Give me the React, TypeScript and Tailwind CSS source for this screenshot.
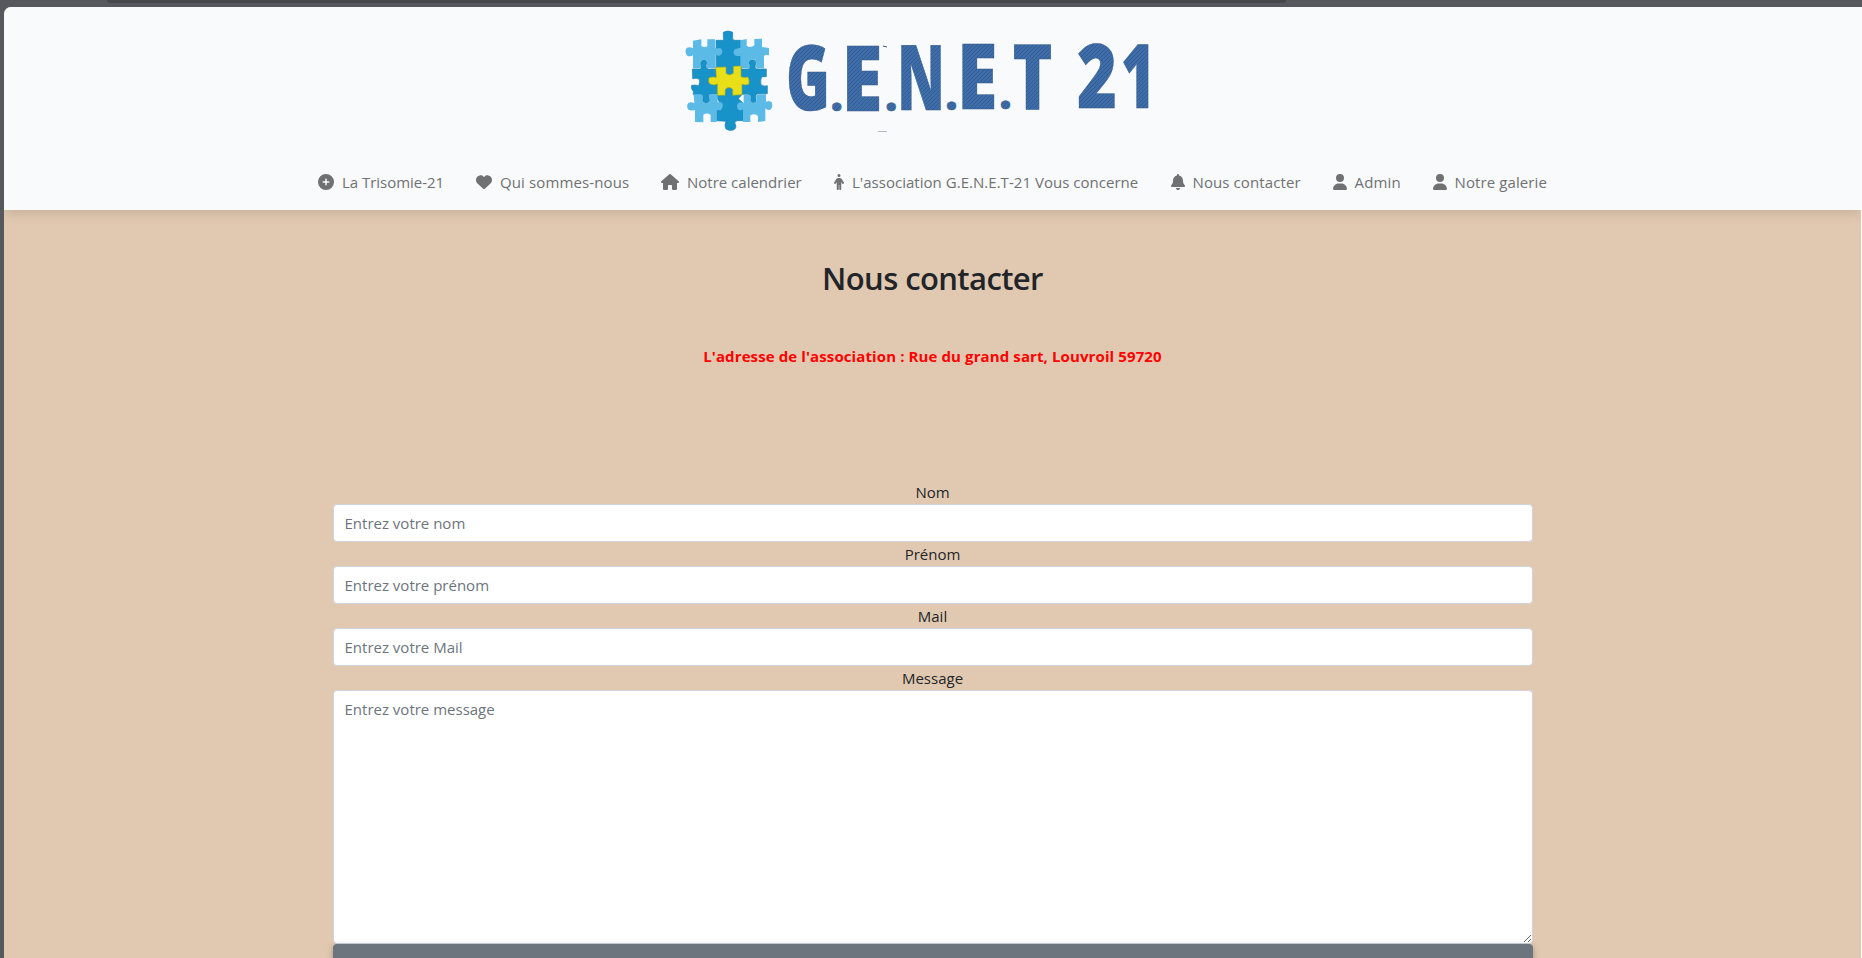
import type { ReactNode } from "react";
import { FaBell, FaCirclePlus, FaHeart, FaHouse, FaPerson, FaUser } from "react-icons/fa6";

type NavEntry = { label: string; icon: ReactNode; size: string };

const navEntries: NavEntry[] = [
  { label: "La Trisomie-21", icon: <FaCirclePlus className="h-4 w-4" />, size: "w-[126px] tracking-[-0.03px]" },
  { label: "Qui sommes-nous", icon: <FaHeart className="h-4 w-4" />, size: "w-[153px] tracking-[0.12px]" },
  { label: "Notre calendrier", icon: <FaHouse className="h-4 w-[18px]" />, size: "w-[141px]" },
  { label: "L'association G.E.N.E.T-21 Vous concerne", icon: <FaPerson className="h-4 w-[10px]" />, size: "w-[304.5px] tracking-[0.03px]" },
  { label: "Nous contacter", icon: <FaBell className="h-4 w-[14px]" />, size: "w-[130px] tracking-[0.1px]" },
  { label: "Admin", icon: <FaUser className="h-4 w-[14px]" />, size: "w-[68px] tracking-[0.15px]" },
  { label: "Notre galerie", icon: <FaUser className="h-4 w-[14px]" />, size: "w-[115px] tracking-[0.1px]" },
];

const letters = [
  { char: "G", x: 116, y: 90, w: 44, size: 91 },
  { char: ".", x: 160.5, y: 90.5, w: 12.5, size: 44 },
  { char: "E", x: 171.5, y: 90.5, w: 41, size: 91 },
  { char: ".", x: 215, y: 90.5, w: 12.5, size: 44 },
  { char: "N", x: 227, y: 89.7, w: 48, size: 91 },
  { char: ".", x: 275.2, y: 89.5, w: 12.5, size: 44 },
  { char: "E", x: 287, y: 88.5, w: 40.5, size: 91 },
  { char: ".", x: 329.2, y: 88.8, w: 12.5, size: 44 },
  { char: "T", x: 342.5, y: 88.5, w: 40, size: 91 },
  { char: "2", x: 407, y: 88, w: 40, size: 88 },
  { char: "1", x: 451, y: 88, w: 34.5, size: 88 },
];

function Logo() {
  return (
    <svg width="500" height="120" viewBox="0 0 500 120" className="overflow-visible" role="img" aria-label="G.E.N.E.T 21">
      <defs>
        <pattern id="denim" width="4" height="4" patternUnits="userSpaceOnUse">
          <rect width="4" height="4" fill="#3f6da8" />
          <path d="M0 4L4 0M-1 1L1 -1M3 5L5 3" stroke="#315d96" strokeWidth="1" />
        </pattern>
      </defs>
      <g transform="scale(.33333)" strokeLinejoin="round">
        <path fill="#1793ca" stroke="#1d7fae" strokeWidth="2" d="M138 61H157Q163 60 160 51V37Q174 29 188 37V52Q186 62 195 61H214V226L205 236L220 250V302H203Q192 303 195 310Q202 325 190 330Q177 334 168 327Q162 316 168 304L140 302V270L150 250L140 230Z" />
        <path fill="#1793ca" stroke="#247fa9" strokeWidth="2" d="M67 147H91Q95 144 92 138Q88 121 101 119Q116 121 109 136Q106 146 115 147H143V223H119Q114 226 119 236Q122 246 110 249Q96 249 97 238Q101 226 93 224H70V214Q62 207 65 196Q75 194 86 197Q91 187 88 178Q79 173 68 176Z" />
        <path fill="#1793ca" stroke="#247fa9" strokeWidth="2" d="M214 147H236Q242 143 238 134Q233 120 247 119Q262 119 256 136Q253 147 264 147H289V170H276Q270 178 273 194Q282 201 292 197V221H264Q253 224 258 237Q260 248 249 248Q239 247 242 235Q244 225 232 223H213Z" />
        <path fill="#5bbae6" d="M69 62L94 58V78Q103 84 112 79V58H135V82Q143 88 147 84Q157 84 157 97Q153 108 145 107L137 104V144H113Q107 141 110 132Q113 119 100 119Q87 120 92 134Q95 143 87 145H69V105Q62 111 52 107Q42 96 50 84Q59 79 69 85Z" />
        <path fill="#5bbae6" d="M211 61L230 57V77Q242 86 253 76V57L276 56V81Q287 82 297 84V106Q287 103 282 107V145H262Q255 141 259 132Q258 117 246 118Q232 122 239 136Q241 145 231 145H211V107Q201 110 193 105Q187 94 196 87L211 83Z" />
        <path fill="#5bbae6" d="M71 223H92Q102 227 97 239Q98 250 110 249Q124 245 117 233Q115 223 125 222H143V247Q153 243 158 251Q160 263 154 269Q145 273 140 269V306H122V285Q111 277 100 284V307L75 306V269Q64 275 54 268Q48 255 56 248Q65 245 73 250Z" />
        <path fill="#5bbae6" d="M221 224H238Q246 228 241 239Q242 250 254 248Q263 242 258 231Q258 224 268 223H288V246Q298 239 306 248Q309 263 301 269Q292 272 286 265V303L264 306V288Q255 279 241 286V306H219V268Q211 275 203 267Q198 255 206 248Q215 245 221 249Z" />
        <path fill="#e8df18" stroke="#9aa72e" strokeWidth="2" d="M137 142L168 141V160Q178 169 190 160V139L213 138V170Q222 174 233 171Q239 178 237 192Q228 197 216 193V224L188 226V208Q177 197 166 208L165 226H142V192Q133 197 122 193Q113 188 117 173Q127 169 139 172Z" />
      </g>
      <g fill="url(#denim)" stroke="#355a85" strokeWidth=".5" fontFamily="'Open Sans', 'Noto Sans', sans-serif" fontWeight="800">
        {letters.map((l) => (
          <text key={l.x} x={l.x} y={l.y} fontSize={l.size} textLength={l.w} lengthAdjust="spacingAndGlyphs">
            {l.char}
          </text>
        ))}
      </g>
      <path d="M213 26l4 1" stroke="#355a85" strokeWidth="1" />
      <path d="M208 111.500h9" stroke="#b4bbc6" strokeWidth="1" />
    </svg>
  );
}

function Field({ label, placeholder }: { label: string; placeholder: string }) {
  return (
    <label className="flex flex-col text-center">
      <span className="h-6 leading-[25px]">{label}</span>
      <input
        placeholder={placeholder}
        className="h-[38px] rounded-[4px] border border-[#ced4da] bg-white px-[11px] outline-none placeholder:text-[#6c757d] placeholder:opacity-100"
      />
    </label>
  );
}

export default function App() {
  return (
    <div className="flex h-[958px] w-[1862px] flex-col overflow-hidden bg-[#57585d] font-['Open_Sans','Noto_Sans',sans-serif] text-[15px] text-[#212529]">
      <div className="h-[7px] shrink-0 pl-[107px]">
        <div className="h-[3px] w-[1179px] rounded-b-[6px] bg-[#46474b]" />
      </div>
      <div className="ml-1 flex grow flex-col overflow-hidden rounded-tl-[7px] border-r border-[#fbfcfd] bg-[#e1c9b1]">
        <header className="flex h-[203px] shrink-0 flex-col bg-[#f8fafc] shadow-[0_4px_12px_0_rgba(0,0,0,0.12)]">
          <div className="flex h-[150px] pt-[13px] pl-[666px]">
            <Logo />
          </div>
          <nav className="flex gap-8 pl-[314px] text-[#707172]">
            {navEntries.map((entry) => (
              <a key={entry.label} href="#" className={`flex h-[50px] shrink-0 items-center gap-2 whitespace-nowrap ${entry.size}`}>
                <span className="shrink-0">{entry.icon}</span>
                <span>{entry.label}</span>
              </a>
            ))}
          </nav>
        </header>
        <main className="flex flex-col items-center">
          <h1 className="mt-12 text-[31px] leading-[40px] font-semibold tracking-[-0.6px]">Nous contacter</h1>
          <p className="mt-[46px] leading-6 font-bold tracking-[0.11px] text-[#ff0000]">
            L'adresse de l'association : Rue du grand sart, Louvroil 59720
          </p>
          <form className="mt-[112px] flex w-[1200px] flex-col">
            <Field label="Nom" placeholder="Entrez votre nom" />
            <Field label="Prénom" placeholder="Entrez votre prénom" />
            <Field label="Mail" placeholder="Entrez votre Mail" />
            <label className="flex flex-col text-center">
              <span className="h-6 leading-[25px]">Message</span>
              <textarea
                placeholder="Entrez votre message"
                className="h-[254px] resize rounded-[4px] border border-[#ced4da] bg-white px-[11px] py-[6px] leading-6 outline-none placeholder:text-[#6c757d] placeholder:opacity-100"
              />
            </label>
            <button type="button" aria-label="Envoyer" className="h-10 rounded-[4px] bg-[#6c757d] shadow-[0_2px_5px_0_rgba(0,0,0,0.2),0_2px_10px_0_rgba(0,0,0,0.1)]" />
          </form>
        </main>
      </div>
    </div>
  );
}
